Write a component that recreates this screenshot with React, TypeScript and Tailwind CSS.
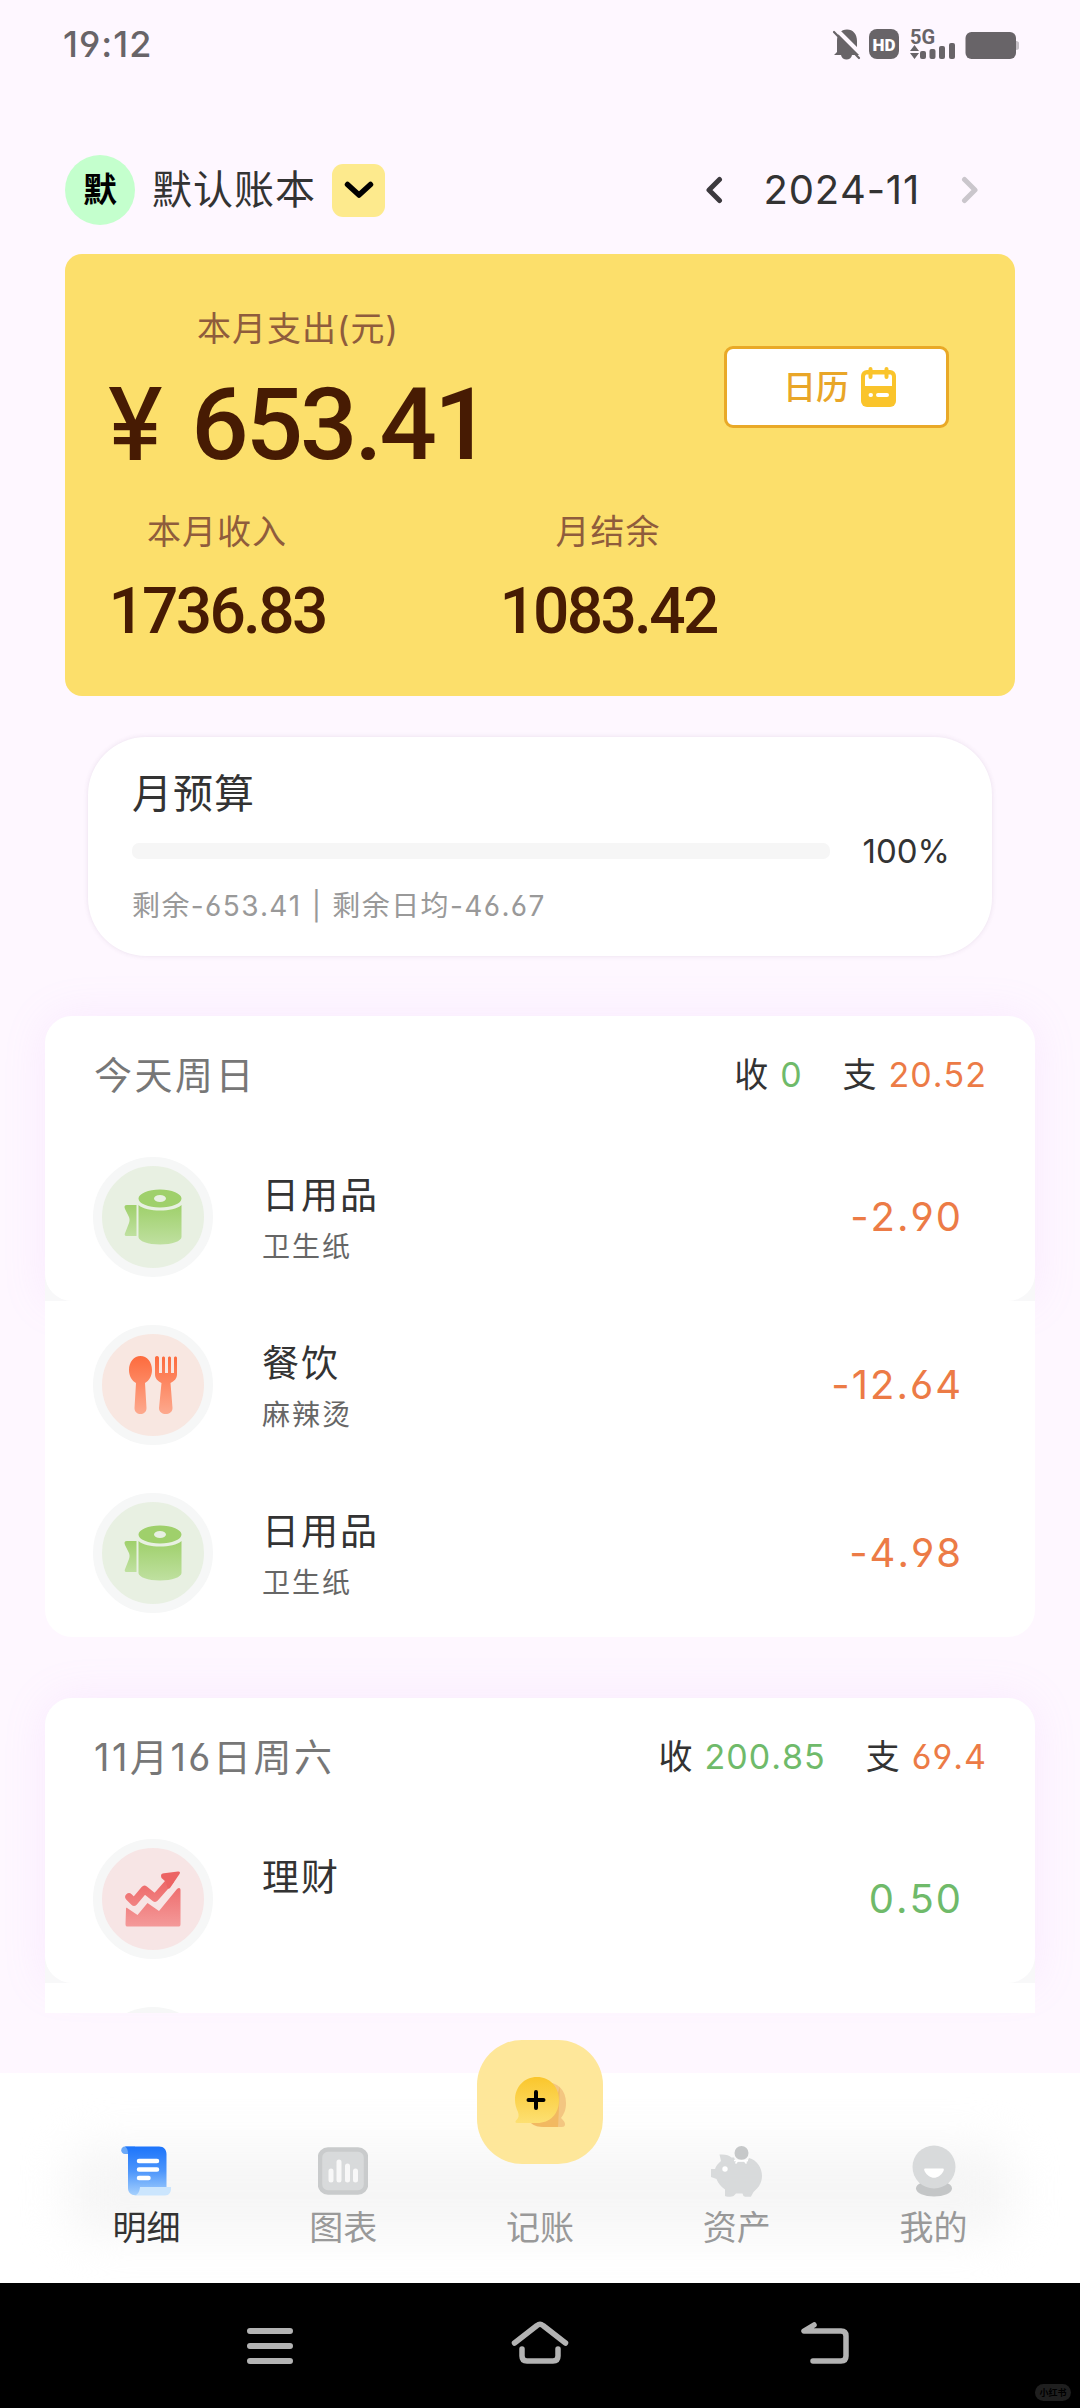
import React from 'react';

type IconKey = 'tissue' | 'dining' | 'finance';

interface RecordItem {
  id: number;
  icon: IconKey;
  title: string;
  note?: string;
  amount: string;
  income?: boolean;
}

interface DayGroup {
  date: string;
  income: string;
  expense: string;
  items: RecordItem[];
}

const groups: DayGroup[] = [
  {
    date: '今天周日',
    income: '0',
    expense: '20.52',
    items: [
      { id: 1, icon: 'tissue', title: '日用品', note: '卫生纸', amount: '-2.90' },
      { id: 2, icon: 'dining', title: '餐饮', note: '麻辣烫', amount: '-12.64' },
      { id: 3, icon: 'tissue', title: '日用品', note: '卫生纸', amount: '-4.98' },
    ],
  },
  {
    date: '11月16日周六',
    income: '200.85',
    expense: '69.4',
    items: [{ id: 4, icon: 'finance', title: '理财', amount: '0.50', income: true }],
  },
];

const TissueIcon = () => (
  <svg width="58" height="56" viewBox="0 0 58 56">
    <defs>
      <linearGradient id="tissue" x1="0" y1="0" x2="0" y2="1">
        <stop offset="0" stopColor="#9fd06b" />
        <stop offset="1" stopColor="#bfe0a0" />
      </linearGradient>
    </defs>
    <path
      fillRule="evenodd"
      d="M14.500 9.500a21.500 9 0 1 0 43 0a21.500 9 0 1 0-43 0zM30 9.500a6 3.500 0 1 0 12 0a6 3.500 0 1 0-12 0z"
      fill="#9fd06b"
    />
    <path
      d="M14.500 16C19 20 27 21.500 36 21.500S53 20 57.500 16V48C57.500 52 48 55.500 36 55.500S14.500 52 14.500 48z"
      fill="url(#tissue)"
    />
    <path d="M3 16H12.500V47H3C0 47 .500 45 1.500 43L5 34C6 31 5.500 29 4.500 27L1 20C0 17.500 .500 16 3 16z" fill="url(#tissue)" />
  </svg>
);

const DiningIcon = () => (
  <svg width="48" height="58" viewBox="0 0 48 58">
    <defs>
      <linearGradient id="dining" x1="0" y1="0" x2="0" y2="58" gradientUnits="userSpaceOnUse">
        <stop offset="0" stopColor="#fd6b3d" />
        <stop offset="1" stopColor="#fda98e" />
      </linearGradient>
    </defs>
    <path
      d="M11.500 0C18 0 23 6 23 14C23 20 20 25 16 27L17.500 52C17.500 60 5.500 60 5.500 52L7 27C3 25 0 20 0 14C0 6 5 0 11.500 0z"
      fill="url(#dining)"
    />
    <path
      d="M28 0C29.500 0 30 1 30 2V17H33V2C33 0 36 0 36 2V17H39V2C39 0 42 0 42 2V17H45V2C45 0 48 0 48 2V18C48 23 45 25 41.500 27L43.500 52C43.500 60 30 60 30 52L32.500 27C29 25 26 23 26 18V2C26 1 26.500 0 28 0z"
      fill="url(#dining)"
    />
  </svg>
);

const FinanceIcon = () => (
  <svg width="56" height="56" viewBox="0 0 56 56">
    <defs>
      <linearGradient id="finance" x1="0" y1="0" x2="0" y2="56" gradientUnits="userSpaceOnUse">
        <stop offset="0" stopColor="#ec5d5d" />
        <stop offset="1" stopColor="#f49a9a" />
      </linearGradient>
    </defs>
    <path
      d="M4 26L9 31L19.500 18.500L30 27L45 10"
      fill="none"
      stroke="url(#finance)"
      strokeWidth="7.500"
      strokeLinecap="round"
      strokeLinejoin="round"
    />
    <path d="M36 5C36 3 37 2.500 39 2.300L53 .500C55 .300 55.500 1.500 54.500 3L45 17C44 18 43 18 42.500 17L41 11L36.500 7z" fill="#ec6464" />
    <path d="M1 38C1 36.500 1.800 36.500 2.500 37.200L12.500 44L22.500 32L34 40L52 18C54 16 55.500 17 55.500 19V53C55.500 55 55 55.500 53 55.500H3C1 55.500 .500 55 .500 53z" fill="url(#finance)" />
  </svg>
);

const itemIcons: Record<IconKey, { bg: string; Icon: React.FC }> = {
  tissue: { bg: 'bg-[#e8f0e2]', Icon: TissueIcon },
  dining: { bg: 'bg-[#f8e7e1]', Icon: DiningIcon },
  finance: { bg: 'bg-[#f7e5e5]', Icon: FinanceIcon },
};

const StatusBar = () => (
  <div className="flex h-[88px] shrink-0 items-center justify-between pl-[63px] pr-[60px] text-[#686468]">
    <span className="text-[36px] font-medium leading-none tracking-[1px]">19:12</span>
    <svg width="188" height="56" viewBox="833 14 188 56" fill="#686468">
      <path d="M838 50V39C838 32 842 27.500 848 27.500S858 32 858 39V50L861 53H835z" />
      <path d="M842 53H853C852 59 843 59 842 53z" />
      <path d="M837 27L864 54" stroke="#fef7ff" strokeWidth="4" />
      <path d="M835 30L860 56" stroke="#686468" strokeWidth="2.200" strokeLinecap="round" />
      <rect x="870" y="27" width="30" height="30" rx="8" />
      <text x="885" y="48.500" fill="#fff" fontSize="17" fontWeight="900" textAnchor="middle" fontFamily="Roboto, sans-serif">
        HD
      </text>
      <text x="911" y="42" fontSize="20" fontWeight="700" fontFamily="Roboto, sans-serif">
        5G
      </text>
      <path d="M915.500 43L920 49H911zM915.500 57L920 51H911z" />
      <rect x="921" y="49" width="6" height="8" rx="2" />
      <rect x="930.500" y="47" width="6" height="10" rx="2" />
      <rect x="940" y="44" width="6" height="13" rx="2" />
      <rect x="950" y="41" width="6" height="16" rx="2" />
      <rect x="966.500" y="30" width="50.500" height="27" rx="6" />
      <path d="M1017 39C1019 39 1020 40 1020 41V46C1020 47 1019 48 1017 48z" fill="#c4bfc5" />
    </svg>
  </div>
);

const Header = () => (
  <div className="mt-[67px] flex h-[70px] shrink-0 items-center pl-[65px] pr-[101px]">
    <div className="flex size-[70px] items-center justify-center rounded-full bg-[#c4ffcd] text-[34px] font-bold leading-none text-black">
      默
    </div>
    <span className="ml-[17px] text-[40px] leading-none tracking-[1px] text-[#333]">默认账本</span>
    <button className="ml-[16px] flex size-[53px] items-center justify-center rounded-[11px] bg-[#fdea8d]">
      <svg width="30" height="18" viewBox="0 0 30 18" fill="none" stroke="#000" strokeWidth="5.500" strokeLinecap="round" strokeLinejoin="round">
        <path d="M3.500 3.500L15 14L26.500 3.500" />
      </svg>
    </button>
    <div className="ml-auto flex items-center">
      <svg width="18" height="28" viewBox="0 0 18 28" fill="none" stroke="#3c393e" strokeWidth="5" strokeLinecap="round" strokeLinejoin="round">
        <path d="M14.500 3.500L4 14L14.500 24.500" />
      </svg>
      <span className="mx-[41px] text-[40px] leading-none tracking-[0.8px] text-[#333]">2024-11</span>
      <svg width="18" height="28" viewBox="0 0 18 28" fill="none" stroke="#cac6cc" strokeWidth="5" strokeLinecap="round" strokeLinejoin="round">
        <path d="M3.500 3.500L14 14L3.500 24.500" />
      </svg>
    </div>
  </div>
);

const SummaryCard = () => (
  <div className="mx-[65px] mt-[29px] flex h-[442px] shrink-0 flex-col rounded-[17px] bg-[#fcdf6b] pl-[42px] text-[#471b03]">
    <div className="flex">
      <div className="flex w-[382px] flex-col items-center pt-[56px]">
        <span className="text-[34px] leading-[38px] tracking-[1px] text-[#8f5c3c]">本月支出(元)</span>
        <div className="mt-[26px] flex h-[100px] items-center gap-[28px] font-medium leading-none">
          <span className="text-[100px]">¥</span>
          <span className="font-[Roboto] text-[101px] tracking-[-3px]">653.41</span>
        </div>
      </div>
      <button className="ml-[235px] mt-[92px] flex h-[82px] w-[225px] items-center rounded-[9px] border-[3px] border-[#e9a927] bg-white pl-[56px] text-[33px] font-medium leading-none text-[#e9a628]">
        日历
        <svg className="ml-[12px]" width="35" height="40" viewBox="0 0 35 40">
          <rect y="3" width="35" height="37" rx="6" fill="#fac42b" />
          <path d="M4 19V10C4 8 5 7.500 6 7.500H29C30 7.500 31 8 31 10V19z" fill="#fff" />
          <path d="M9.500 2V10M25.500 2V10" stroke="#fac42b" strokeWidth="4" strokeLinecap="round" />
          <path d="M9.500 28H10M17 28H26" stroke="#fff" strokeWidth="4" strokeLinecap="round" />
        </svg>
      </button>
    </div>
    <div className="mt-[39px] flex">
      {[
        { label: '本月收入', value: '1736.83' },
        { label: '月结余', value: '1083.42' },
      ].map((stat) => (
        <div key={stat.label} className="mr-[171px] flex w-[220px] flex-col items-center">
          <span className="text-[34px] leading-[38px] tracking-[1px] text-[#8f5c3c]">{stat.label}</span>
          <span className="mt-[27px] font-[Roboto] text-[64px] font-medium leading-[68px] tracking-[-2.700px]">{stat.value}</span>
        </div>
      ))}
    </div>
  </div>
);

const BudgetCard = () => (
  <div className="mx-[88px] mt-[41px] flex h-[219px] shrink-0 flex-col rounded-[58px] bg-white pl-[44px] pr-[42px] pt-[35px] shadow-[0_0_5px_rgba(90,60,110,0.12)]">
    <span className="text-[40px] leading-[44px] tracking-[1px] text-[#333]">月预算</span>
    <div className="mt-[15px] flex h-[40px] items-center justify-between">
      <div className="h-[16px] w-[698px] rounded-[7px] bg-[#f6f6f6]" />
      <span className="text-[33px] leading-none text-[#333]">100%</span>
    </div>
    <span className="mt-[18px] text-[28px] leading-[34px] tracking-[1.400px] text-[#999]">
      剩余-653.41<span className="mx-[10px]">|</span>剩余日均-46.67
    </span>
  </div>
);

const DayHeader = ({ group }: { group: DayGroup }) => (
  <div className="flex h-[117px] items-center justify-between pl-[49px] pr-[48px]">
    <span className="text-[38px] leading-none tracking-[2.500px] text-[#777]">{group.date}</span>
    <div className="flex items-center gap-[40px] text-[34px] leading-none tracking-[1px] text-[#333]">
      <span className="flex items-center gap-[11px]">
        收<span className="text-[#6fba6a]">{group.income}</span>
      </span>
      <span className="flex items-center gap-[11px]">
        支<span className="text-[#ec7b46]">{group.expense}</span>
      </span>
    </div>
  </div>
);

const RecordRow = ({ item }: { item: RecordItem }) => {
  const { bg, Icon } = itemIcons[item.icon];

  return (
    <div className="flex h-[168px] items-center pl-[48px] pr-[72px]">
      <div className={`flex size-[120px] items-center justify-center rounded-full border-[9px] border-[#f6f7f7] ${bg}`}>
        <Icon />
      </div>
      <div className="ml-[49px] flex h-[102px] flex-col gap-[13px] pt-[9px]">
        <span className="text-[37px] leading-[42px] tracking-[2px] text-[#333]">{item.title}</span>
        {item.note && <span className="text-[28px] leading-[34px] tracking-[2px] text-[#666]">{item.note}</span>}
      </div>
      <span className={`ml-auto text-[40px] leading-none tracking-[2px] ${item.income ? 'text-[#6fba6a]' : 'text-[#ec7b46]'}`}>
        {item.amount}
      </span>
    </div>
  );
};

const DayCard = ({ group, clipped }: { group: DayGroup; clipped?: boolean }) => {
  const [first, ...rest] = group.items;

  return (
    <div className="mx-[45px]">
      <div className="rounded-t-[27px] bg-[#f8f8f9] shadow-[0_0_44px_rgba(215,150,250,0.13)]">
        <div className="rounded-[27px] bg-white">
          <DayHeader group={group} />
          <RecordRow item={first} />
        </div>
      </div>
      {rest.length > 0 && (
        <div className="relative rounded-b-[27px] bg-white">
          {rest.map((item) => (
            <RecordRow key={item.id} item={item} />
          ))}
        </div>
      )}
      {clipped && (
        <div className="relative h-[30px] overflow-hidden bg-white pl-[48px] pt-[24px]">
          <div className="size-[120px] rounded-full bg-[#f6f7f7]" />
        </div>
      )}
    </div>
  );
};

const BillIcon = () => (
  <svg width="51" height="50" viewBox="0 0 51 50">
    <defs>
      <linearGradient id="bill" x1="0" y1="0" x2="0" y2="1">
        <stop offset="0" stopColor="#1c74fb" />
        <stop offset="0.500" stopColor="#4c95fb" />
        <stop offset="1" stopColor="#a5d0fd" />
      </linearGradient>
    </defs>
    <path d="M4 .500H14V8H4C-1 8-1 .500 4 .500z" fill="#6aa8f8" />
    <path d="M4 .500H38C43 .500 45.500 4 45.500 8V42L16 49C11 50 7 47 7 42V8C7 4 6 2 4 .500z" fill="url(#bill)" />
    <path d="M19 41H50C50.500 46 48 49.500 44 49.500H12C16 49.500 18.500 47 19 41z" fill="#cbe5fd" />
    <path d="M18 15H36M18 23.500H36M18 32H27.500" stroke="#fff" strokeWidth="4.500" strokeLinecap="round" />
  </svg>
);

const ChartIcon = () => (
  <svg width="50" height="50" viewBox="0 0 50 50">
    <rect x="2" y="3.500" width="46" height="43" rx="8" fill="#d8dadb" stroke="#c9cbcc" strokeWidth="4.500" />
    <path d="M13 25V34M21 16V34M29.500 20V34M37.500 25V34" stroke="#f8f8f8" strokeWidth="5" strokeLinecap="round" />
  </svg>
);

const PiggyIcon = () => (
  <svg width="51" height="51" viewBox="0 0 51 51">
    <circle cx="30.500" cy="7" r="7" fill="#c6c8c9" />
    <path
      d="M8.500 8.500C14 8 18 9 20.500 11.500H23L25 16H36L38 12C46 14 51 22 51 30C51 38 46 43 42.500 46L40 50.500C39 51 33 51 32.500 50L31.500 47.500H25L22.500 50C21 51 15 51 14 50V43.500C10 41 7 37 5.500 33L0 31V23H4C5 20 7 17.500 10 15z"
      fill="#d8dadb"
    />
    <circle cx="14" cy="23" r="2.700" fill="#fff" />
    <path d="M23 14.500H37M24.500 17.500L27 14.500M35.500 17.500L33 14.500" stroke="#fff" strokeWidth="1.600" />
  </svg>
);

const ProfileIcon = () => (
  <svg width="50" height="52" viewBox="0 0 50 52">
    <ellipse cx="25" cy="43.500" rx="18" ry="8" fill="#c4c6c7" />
    <circle cx="25" cy="22" r="21.500" fill="#d8dadb" />
    <path d="M16 23.500H34C35 23.500 35 24.500 34.500 26C30 35 20 35 15.500 26C15 24.500 15 23.500 16 23.500z" fill="#fff" />
  </svg>
);

const tabs: { label: string; Icon?: React.FC; active?: boolean }[] = [
  { label: '明细', Icon: BillIcon, active: true },
  { label: '图表', Icon: ChartIcon },
  { label: '记账' },
  { label: '资产', Icon: PiggyIcon },
  { label: '我的', Icon: ProfileIcon },
];

const TabBar = () => (
  <div className="relative h-[210px] shrink-0 bg-white">
    <div className="h-full overflow-hidden px-[66px] pt-[72px]">
      <div className="h-[92px] rounded-[30px] bg-[#f6f6f6] blur-[22px]" />
    </div>
    {/* Tabs sit above the soft glow */}
    <div className="absolute inset-x-[48px] top-0 flex pt-[72px]">
      {tabs.map(({ label, Icon, active }) => (
        <div key={label} className="flex flex-1 flex-col items-center">
          <div className="flex h-[52px] items-center">{Icon && <Icon />}</div>
          <span className={`mt-[11px] text-[34px] leading-[40px] ${active ? 'text-[#333]' : 'text-[#999]'}`}>{label}</span>
        </div>
      ))}
    </div>
    <button className="absolute left-[477px] top-[-33px] flex h-[124px] w-[126px] items-center justify-center rounded-[45px] bg-[#fee79a]">
      <svg width="52" height="52" viewBox="0 0 52 52">
        <defs>
          <linearGradient id="bubble" x1="0" y1="0" x2="0" y2="1">
            <stop offset="0" stopColor="#fac62c" />
            <stop offset="1" stopColor="#fde072" />
          </linearGradient>
        </defs>
        <path d="M31 6C44 6 52 14 52 27C52 34 50 38 47 42C49 44 51 46 51 48C51 51 49 51 46 51H31C24 51 20 50 17 47z" fill="#f3c681" />
        <path d="M46 10C40 34 32 44 17 47C21 50 26 51 31 51H44z" fill="#f2ab42" opacity="0.500" />
        <path d="M23 1C36 1 45 11 45 24C45 38 36 47 23 47H3C1 47 1 45 2.500 44C5 42 5 39 4 36C2 32 1 28 1 24C1 11 10 1 23 1z" fill="url(#bubble)" />
        <path d="M22 16V32M14.500 24H29.500" stroke="#000" strokeWidth="4" strokeLinecap="round" />
      </svg>
    </button>
  </div>
);

const SystemNav = () => (
  <div className="relative flex h-[126px] shrink-0 items-center justify-between bg-black px-[230px]">
    <svg width="80" height="60" viewBox="230 2315 80 60" fill="none" stroke="#b3b3b3" strokeWidth="6" strokeLinecap="round">
      <path d="M250 2330H290M250 2345H290M250 2360H290" />
    </svg>
    <svg width="80" height="60" viewBox="500 2315 80 60" fill="none" stroke="#b3b3b3" strokeWidth="5.500" strokeLinecap="round" strokeLinejoin="round">
      <path d="M514.500 2342L537 2324.500Q540 2322 543 2324.500L565.500 2342" />
      <path d="M522 2348V2355Q522 2360 527 2360H553Q558 2360 558 2355V2348" />
    </svg>
    <svg width="80" height="60" viewBox="770 2315 80 60" fill="none" stroke="#b3b3b3" strokeWidth="5.500" strokeLinecap="round" strokeLinejoin="round">
      <path d="M814 2324L804 2330H841Q846 2330 846 2335V2355Q846 2360 841 2360H813" />
    </svg>
    <span className="absolute bottom-[8px] right-[9px] flex h-[17px] w-[36px] items-center justify-center rounded-full bg-[#1f1f1f] text-[9px] font-bold leading-none text-black">
      小红书
    </span>
  </div>
);

export default function App() {
  return (
    <div className="flex h-[2408px] w-[1080px] flex-col overflow-hidden bg-[#fef7ff] font-[Inter,'Noto_Sans_CJK_SC',sans-serif] [font-feature-settings:'cv03','cv04'] [font-kerning:none]">
      <StatusBar />
      <Header />
      <SummaryCard />
      <BudgetCard />
      <div className="mt-[60px] flex h-[1057px] shrink-0 flex-col gap-[61px]">
        {groups.map((group, index) => (
          <DayCard key={group.date} group={group} clipped={index === groups.length - 1} />
        ))}
      </div>
      <TabBar />
      <SystemNav />
    </div>
  );
}
